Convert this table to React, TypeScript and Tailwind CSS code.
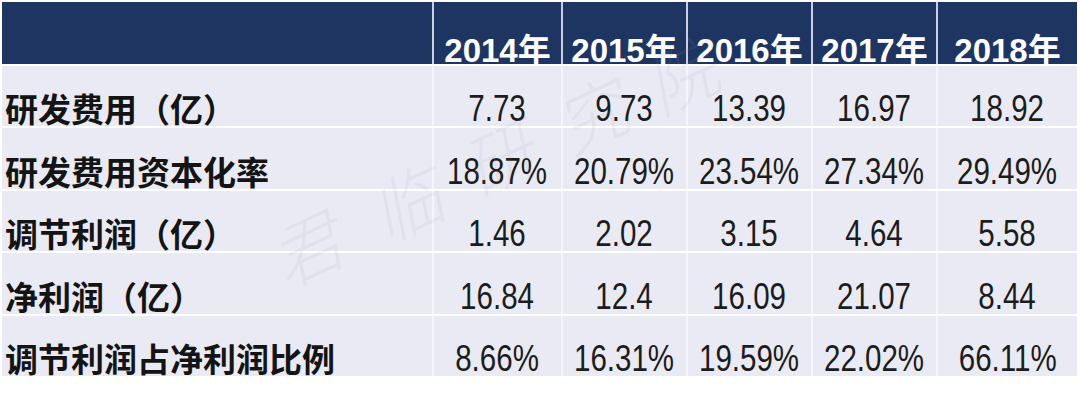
const years = ["2014年", "2015年", "2016年", "2017年", "2018年"];

const rows: { label: string; values: string[] }[] = [
  { label: "研发费用（亿）", values: ["7.73", "9.73", "13.39", "16.97", "18.92"] },
  { label: "研发费用资本化率", values: ["18.87%", "20.79%", "23.54%", "27.34%", "29.49%"] },
  { label: "调节利润（亿）", values: ["1.46", "2.02", "3.15", "4.64", "5.58"] },
  { label: "净利润（亿）", values: ["16.84", "12.4", "16.09", "21.07", "8.44"] },
  { label: "调节利润占净利润比例", values: ["8.66%", "16.31%", "19.59%", "22.02%", "66.11%"] },
];

const cols = "grid grid-cols-[430px_129px_125px_125px_125px_141px]";
const font = { fontFamily: '"Liberation Sans", "Noto Sans CJK SC", sans-serif' };

// faint diagonal watermark over the table
function Watermark() {
  const chars = [
    { c: "君", x: "left-[270px] top-[215px]" },
    { c: "临", x: "left-[370px] top-[170px]" },
    { c: "研", x: "left-[462px] top-[125px]" },
    { c: "究", x: "left-[555px] top-[82px]" },
    { c: "院", x: "left-[645px] top-[42px]" },
  ];
  return (
    <div className="pointer-events-none absolute inset-0">
      {chars.map((ch) => (
        <span
          key={ch.c}
          className={`absolute ${ch.x} -rotate-[25deg] text-[70px] font-light italic leading-none text-[#8f95ad]/10`}
        >
          {ch.c}
        </span>
      ))}
    </div>
  );
}

export default function App() {
  return (
    <div className="h-[400px] w-[1080px] bg-white pl-[2px] pt-[2px]" style={font}>
      <div className="relative w-[1075px]">
        <div className={`${cols} h-[62px] bg-[#1f3561]`}>
          <div />
          {years.map((y) => (
            <div
              key={y}
              className="flex items-end justify-center border-l-2 border-[#c9cfe0] text-[33px] font-bold leading-none text-white"
            >
              <span className="translate-y-[3px]">{y}</span>
            </div>
          ))}
        </div>
        {rows.map((r) => (
          <div key={r.label} className={`${cols} h-[62.4px] border-t-2 border-white bg-[#e9eaf3]`}>
            <div className="flex items-end pl-[3px] text-[33px] font-semibold leading-none text-[#141414]">
              <span className="translate-y-[1px]">{r.label}</span>
            </div>
            {r.values.map((v, i) => (
              <div key={i} className="flex items-end justify-center border-l-2 border-[#f5f6fb]">
                <span className="inline-block translate-y-[1px] scale-x-[0.82] text-[36px] leading-none text-[#1c1c1c]">
                  {v}
                </span>
              </div>
            ))}
          </div>
        ))}
        <Watermark />
      </div>
    </div>
  );
}
